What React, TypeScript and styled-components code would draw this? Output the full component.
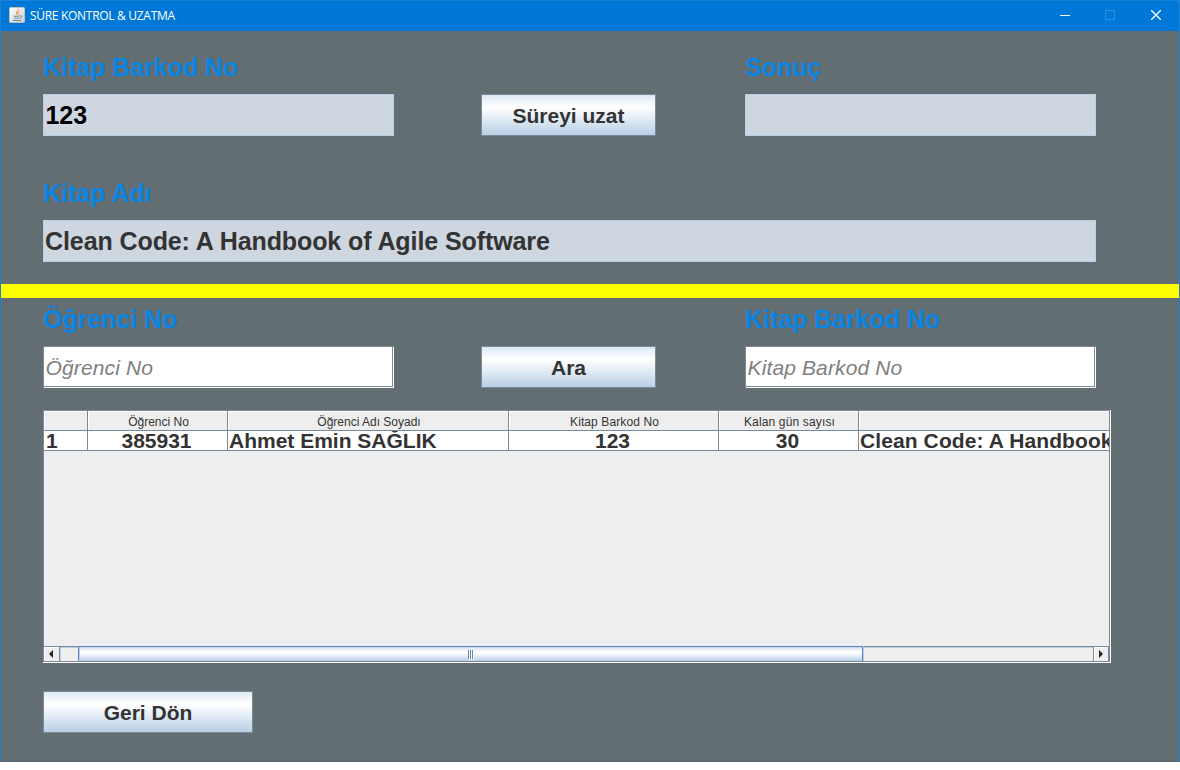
import React from "react";
import styled, { createGlobalStyle, css } from "styled-components";

const edge = "#7a8a99";

const GlobalStyle = createGlobalStyle`
  *, *::before, *::after { box-sizing: border-box; }
  body {
    margin: 0;
    background: #fff;
    font-family: "Liberation Sans", Arial, sans-serif;
    color: #333;
    overflow: hidden;
  }
`;

const Window = styled.div`
  width: 1180px;
  height: 762px;
  display: flex;
  flex-direction: column;
  background: #636e72;
  border: 1px solid #1883d7;
  border-bottom-color: #59666b;
`;

const TitleBar = styled.header`
  height: 30px;
  flex: none;
  display: flex;
  align-items: center;
  background: #0078d7;
  color: #fff;
  padding-left: 8px;
`;

const AppIcon = styled.svg`
  flex: none;
  align-self: flex-start;
  margin-top: 6px;
`;

const Title = styled.h1`
  flex: 1;
  margin: 0 0 0 4px;
  font: 400 12px/16px "Open Sans", "Noto Sans", sans-serif;
  letter-spacing: -0.3px;
`;

const WindowButton = styled.button<{ $dim?: boolean }>`
  width: 46px;
  height: 28px;
  padding: 0;
  border: 0;
  background: none;
  color: ${(p) => (p.$dim ? "#2f90de" : "#fff")};
  display: flex;
  align-items: center;
  justify-content: center;
`;

const Controls = styled.div`
  display: flex;
  align-self: flex-start;
`;

const Section = styled.section<{ $top: number; $bottom?: number }>`
  padding: ${(p) => p.$top}px 0 ${(p) => p.$bottom ?? 0}px 42px;
`;

const FormRow = styled.div`
  display: grid;
  grid-template-columns: 438px 264px 351px;
  align-items: end;
`;

const WideRow = styled.div`
  width: 1053px;
  margin-top: 36px;
`;

const Group = styled.div`
  display: flex;
  flex-direction: column;
  width: 351px;
`;

const Label = styled.label`
  display: block;
  height: 48px;
  line-height: 42px;
  font-size: 25px;
  font-weight: 700;
  color: #0984e3;
  white-space: nowrap;
  letter-spacing: -0.06px;
`;

const Field = styled.div<{ $editable?: boolean; $strong?: boolean }>`
  height: 42px;
  white-space: nowrap;
  ${(p) =>
    p.$editable
      ? css`
          line-height: 42px;
          padding-left: 1.5px;
          background: #fff;
          border: 1px solid ${edge};
          border-right: 0;
          border-bottom: 0;
          box-shadow: inset -1px -1px 0 #fff, inset -2px -2px 0 ${edge};
          font-size: 21px;
          font-style: italic;
          color: #808080;
          letter-spacing: 0.13px;
        `
      : css`
          line-height: 40px;
          padding-left: ${p.$strong ? 1.5 : 1}px;
          background: #ced6e0;
          border: 1px solid #b8cfe5;
          font-size: 25px;
          font-weight: 700;
          color: ${p.$strong ? "#000" : "#333"};
          letter-spacing: -0.09px;
        `}
`;

const Button = styled.button<{ $width: number }>`
  width: ${(p) => p.$width}px;
  height: 42px;
  padding: 1px 0 0;
  border: 1px solid ${edge};
  background: linear-gradient(#dde8f3 0%, #fff 30%, #fff 32%, #b8cfe5 100%);
  font: 700 21px/39px "Liberation Sans", Arial, sans-serif;
  color: #333;
`;

const Divider = styled.div`
  height: 14px;
  flex: none;
  background: #ff0;
`;

const TablePane = styled.div`
  width: 1068px;
  height: 253px;
  margin-top: 22px;
  border-right: 1px solid #fff;
  border-bottom: 1px solid #fff;
`;

const PaneInner = styled.div`
  height: 252px;
  border: 1px solid ${edge};
  background: #eee;
  display: flex;
  flex-direction: column;
`;

const Row = styled.div`
  display: grid;
  grid-template-columns: 44px 140px 281px 210px 140px 250px;
  grid-template-rows: 20px;
`;

const cellEdges = css<{ $last?: boolean }>`
  border-bottom: 1px solid ${edge};
  border-right: ${(p) => (p.$last ? "0" : `1px solid ${edge}`)};
  white-space: nowrap;
`;

const HeaderCell = styled.div<{ $last?: boolean; $spacing: number }>`
  ${cellEdges}
  box-shadow: inset 1px 1px 0 #fff;
  text-align: center;
  font-size: 12px;
  line-height: 19px;
  padding: 2px 0 0 2px;
  letter-spacing: ${(p) => p.$spacing}px;
`;

const DataCell = styled.div<{ $center?: boolean; $last?: boolean; $indent?: number }>`
  ${cellEdges}
  background: #fff;
  overflow: hidden;
  text-align: ${(p) => (p.$center ? "center" : "left")};
  padding-left: ${(p) => (p.$center ? 0 : p.$indent ?? 1)}px;
  padding-right: ${(p) => (p.$center ? 2 : 0)}px;
  font-size: 21px;
  font-weight: 700;
  line-height: 19px;
  letter-spacing: ${(p) => (p.$last ? 0.1 : 0)}px;
`;

const ScrollBar = styled.div`
  height: 15px;
  margin-top: auto;
  display: flex;
  border-top: 1px solid ${edge};
`;

const ScrollArrow = styled.div<{ $right?: boolean }>`
  width: 16px;
  display: flex;
  align-items: center;
  padding-left: 5px;
  border-left: ${(p) => (p.$right ? `1px solid ${edge}` : "0")};
  border-right: 1px solid ${edge};
  box-shadow: inset 1px 1px 0 #fff;
`;

const Track = styled.div`
  flex: 1;
  display: flex;
  box-shadow: inset 1px 1px 0 #b8cfe5;
  padding-left: 18px;
`;

const Thumb = styled.div`
  width: 785px;
  height: 15px;
  margin-top: -1px;
  border: 1px solid #6382bf;
  border-bottom: 0;
  background: linear-gradient(#c8dbee 0 1px, #dde8f3 1px, #fff 5px, #fff 6px, #b8cfe5 100%);
  box-shadow: inset 1px 0 0 #b8cfe5, 1px 0 0 #b8cfe5;
  display: flex;
  align-items: flex-end;
  justify-content: center;
  padding-bottom: 1px;
`;

const Footer = styled.footer`
  padding: 28px 0 0 42px;
`;

const JavaIcon = () => (
  <AppIcon width="17" height="17" viewBox="0 0 17 17" fill="none">
    <defs>
      <linearGradient id="tile" x1="0" y1="0" x2="1" y2="1">
        <stop offset="0" stopColor="#fff" />
        <stop offset="1" stopColor="#cfcfcf" />
      </linearGradient>
    </defs>
    <rect x=".5" y="0.5" width="15" height="15" rx="1" fill="url(#tile)" stroke="#c4c0b8" />
    <path d="M9.6 2c.6 1.7-3.1 2.3-2.3 4.2l.8 1.6M10.5 4.6c-1.7.7-2 1.2-1.3 2.1.4.5 0 .9-.4 1.2" stroke="#e9812f" strokeWidth="1" />
    <path d="M4.6 9c1.7.5 4.6.4 6.2-.1M5.2 11c1.4.4 3.6.4 5 0M3.7 13.2c2.5.6 6.1.6 8.6 0M11.3 8.7c2.3-.3 1.7 1.9-.4 2.2" stroke="#527f9d" strokeWidth=".9" />
  </AppIcon>
);

const headers = [
  { text: "", spacing: 0 },
  { text: "Öğrenci No", spacing: 0 },
  { text: "Öğrenci Adı Soyadı", spacing: 0 },
  { text: "Kitap Barkod No", spacing: 0.1 },
  { text: "Kalan gün sayısı", spacing: 0.15 },
  { text: "", spacing: 0 },
];

export default function App() {
  return (
    <>
      <GlobalStyle />
      <Window>
        <TitleBar>
          <JavaIcon />
          <Title>SÜRE KONTROL &amp; UZATMA</Title>
          <Controls>
            <WindowButton aria-label="Minimize">
              <svg width="12" height="10"><path d="M2 5.5h10" stroke="currentColor" /></svg>
            </WindowButton>
            <WindowButton $dim aria-label="Maximize">
              <svg width="10" height="10"><rect x=".5" y=".5" width="9" height="9" fill="none" stroke="currentColor" /></svg>
            </WindowButton>
            <WindowButton aria-label="Close">
              <svg width="10" height="10"><path d="M0 0l10 10M10 0L0 10" stroke="currentColor" strokeWidth="1.3" /></svg>
            </WindowButton>
          </Controls>
        </TitleBar>

        <Section $top={15} $bottom={22}>
          <FormRow>
            <Group>
              <Label>Kitap Barkod No</Label>
              <Field $strong>123</Field>
            </Group>
            <Button $width={175}>Süreyi uzat</Button>
            <Group>
              <Label>Sonuç</Label>
              <Field />
            </Group>
          </FormRow>
          <WideRow>
            <Label>Kitap Adı</Label>
            <Field>Clean Code: A Handbook of Agile Software</Field>
          </WideRow>
        </Section>

        <Divider />

        <Section $top={0}>
          <FormRow>
            <Group>
              <Label>Öğrenci No</Label>
              <Field $editable>Öğrenci No</Field>
            </Group>
            <Button $width={175}>Ara</Button>
            <Group>
              <Label>Kitap Barkod No</Label>
              <Field $editable>Kitap Barkod No</Field>
            </Group>
          </FormRow>
          <TablePane>
            <PaneInner>
              <Row>
                {headers.map((h, i) => (
                  <HeaderCell key={i} $last={i === headers.length - 1} $spacing={h.spacing}>
                    {h.text}
                  </HeaderCell>
                ))}
              </Row>
              <Row>
                <DataCell $indent={2}>1</DataCell>
                <DataCell $center>385931</DataCell>
                <DataCell>Ahmet Emin SAĞLIK</DataCell>
                <DataCell $center>123</DataCell>
                <DataCell $center>30</DataCell>
                <DataCell $last>Clean Code: A Handbook</DataCell>
              </Row>
              <ScrollBar>
                <ScrollArrow>
                  <svg width="4" height="8"><path d="M4 0v8L0 4z" fill="#222" /></svg>
                </ScrollArrow>
                <Track>
                  <Thumb>
                    <svg width="6" height="10">
                      <path d="M1.5 1v9M3.5 1v9M5.5 1v9" stroke="#fff" />
                      <path d="M.5 0v9M2.5 0v9M4.5 0v9" stroke="#6382bf" />
                    </svg>
                  </Thumb>
                </Track>
                <ScrollArrow $right>
                  <svg width="4" height="8"><path d="M0 0v8l4-4z" fill="#222" /></svg>
                </ScrollArrow>
              </ScrollBar>
            </PaneInner>
          </TablePane>
        </Section>

        <Footer>
          <Button $width={210}>Geri Dön</Button>
        </Footer>
      </Window>
    </>
  );
}
